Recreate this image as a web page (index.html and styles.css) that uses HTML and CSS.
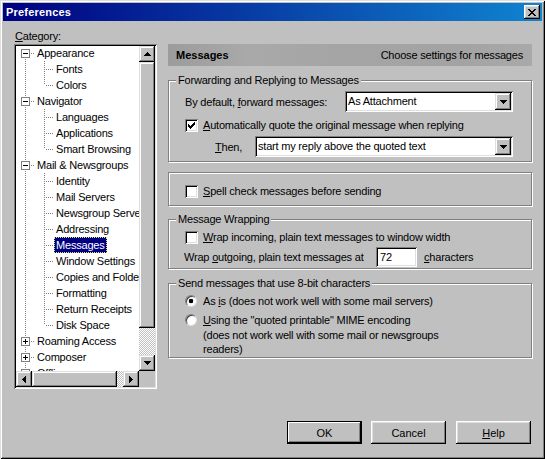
FILE: index.html
```html
<!DOCTYPE html>
<html>
<head>
<meta charset="utf-8">
<title>Preferences</title>
<link rel="stylesheet" href="styles.css">
</head>
<body>
<div class="window">
  <div class="titlebar">
    <span class="title">Preferences</span>
    <button class="tb-close" aria-label="Close"><svg width="8" height="7" viewBox="0 0 8 7"><path d="M0 0h2v1h1v1h2v-1h1v-1h2v1h-1v1h-1v1h-1v1h1v1h1v1h1v1h-2v-1h-1v-1h-2v1h-1v1h-2v-1h1v-1h1v-1h1v-1h-1v-1h-1v-1h-1z" fill="#000"/></svg></button>
  </div>

  <div class="main">
    <div class="left">
      <div class="cat-label"><u>C</u>ategory:</div>
      <div class="tree">
        <div class="tree-view">
          <div class="tree-list">
            <div class="node">
              <div class="row root"><span class="exp minus"></span><span class="conn"></span><span class="lbl">Appearance</span></div>
              <div class="children">
                <div class="row child"><span class="conn"></span><span class="lbl">Fonts</span></div>
                <div class="row child"><span class="conn"></span><span class="lbl">Colors</span></div>
              </div>
            </div>
            <div class="node">
              <div class="row root"><span class="exp minus"></span><span class="conn"></span><span class="lbl">Navigator</span></div>
              <div class="children">
                <div class="row child"><span class="conn"></span><span class="lbl">Languages</span></div>
                <div class="row child"><span class="conn"></span><span class="lbl">Applications</span></div>
                <div class="row child"><span class="conn"></span><span class="lbl">Smart Browsing</span></div>
              </div>
            </div>
            <div class="node">
              <div class="row root"><span class="exp minus"></span><span class="conn"></span><span class="lbl">Mail &amp; Newsgroups</span></div>
              <div class="children">
                <div class="row child"><span class="conn"></span><span class="lbl">Identity</span></div>
                <div class="row child"><span class="conn"></span><span class="lbl">Mail Servers</span></div>
                <div class="row child"><span class="conn"></span><span class="lbl">Newsgroup Servers</span></div>
                <div class="row child"><span class="conn"></span><span class="lbl">Addressing</span></div>
                <div class="row child"><span class="conn"></span><span class="lbl sel">Messages</span></div>
                <div class="row child"><span class="conn"></span><span class="lbl">Window Settings</span></div>
                <div class="row child"><span class="conn"></span><span class="lbl">Copies and Folders</span></div>
                <div class="row child"><span class="conn"></span><span class="lbl">Formatting</span></div>
                <div class="row child"><span class="conn"></span><span class="lbl">Return Receipts</span></div>
                <div class="row child"><span class="conn"></span><span class="lbl">Disk Space</span></div>
              </div>
            </div>
            <div class="node"><div class="row root"><span class="exp plus"></span><span class="conn"></span><span class="lbl">Roaming Access</span></div></div>
            <div class="node"><div class="row root"><span class="exp plus"></span><span class="conn"></span><span class="lbl">Composer</span></div></div>
            <div class="node"><div class="row root"><span class="exp plus"></span><span class="conn"></span><span class="lbl">Offline</span></div></div>
            <div class="node"><div class="row root"><span class="exp plus"></span><span class="conn"></span><span class="lbl">Advanced</span></div></div>
          </div>
        </div>
        <div class="vscroll">
          <div class="sb-btn"><svg width="7" height="4" viewBox="0 0 7 4"><path d="M3 0h1v1h1v1h1v1h1v1H0V3h1V2h1V1h1z"/></svg></div>
          <div class="track v">
            <div class="thumb vthumb"></div>
            <div class="checker"></div>
          </div>
          <div class="sb-btn"><svg width="7" height="4" viewBox="0 0 7 4"><path d="M0 0h7v1h-1v1h-1v1h-1v1h-1v-1h-1v-1h-1v-1h-1z"/></svg></div>
        </div>
        <div class="hscroll">
          <div class="sb-btn"><svg width="4" height="7" viewBox="0 0 4 7"><path d="M3 0h1v7h-1v-1h-1v-1h-1v-1h-1v-1h1v-1h1v-1h1z"/></svg></div>
          <div class="track h">
            <div class="thumb hthumb"></div>
            <div class="checker"></div>
          </div>
          <div class="sb-btn"><svg width="4" height="7" viewBox="0 0 4 7"><path d="M0 0h1v1h1v1h1v1h1v1h-1v1h-1v1h-1v1h-1z"/></svg></div>
        </div>
        <div class="corner"></div>
      </div>
    </div>

    <div class="right">
      <div class="header">
        <span class="header-title">Messages</span>
        <span class="header-sub">Choose settings for messages</span>
      </div>

      <div class="group g1">
        <div class="gtitle">Forwarding and Replying to Messages</div>
        <div class="frow r-forward">
          <span>By default, <u>f</u>orward messages:</span>
          <div class="combo w-forward">
            <span class="combo-text">As Attachment</span>
            <span class="combo-btn"><svg width="7" height="4" viewBox="0 0 7 4"><path d="M0 0h7v1h-1v1h-1v1h-1v1h-1v-1h-1v-1h-1v-1h-1z"/></svg></span>
          </div>
        </div>
        <div class="crow r-quote">
          <span class="cb"><svg width="7" height="7" viewBox="0 0 7 7"><path d="M6 0h1v1h-1z M5 1h2v1h-2z M0 2h1v1h-1z M4 2h3v1h-3z M0 3h2v1h-2z M3 3h3v1h-3z M0 4h5v1h-5z M1 5h3v1h-3z M2 6h1v1h-1z"/></svg></span>
          <span><u>A</u>utomatically quote the original message when replying</span>
        </div>
        <div class="frow r-then">
          <span><u>T</u>hen,</span>
          <div class="combo w-then">
            <span class="combo-text">start my reply above the quoted text</span>
            <span class="combo-btn"><svg width="7" height="4" viewBox="0 0 7 4"><path d="M0 0h7v1h-1v1h-1v1h-1v1h-1v-1h-1v-1h-1v-1h-1z"/></svg></span>
          </div>
        </div>
      </div>

      <div class="group g2">
        <div class="crow r-spell">
          <span class="cb"></span>
          <span><u>S</u>pell check messages before sending</span>
        </div>
      </div>

      <div class="group g3">
        <div class="gtitle">Message Wrapping</div>
        <div class="crow r-wrapin">
          <span class="cb"></span>
          <span><u>W</u>rap incoming, plain text messages to window width</span>
        </div>
        <div class="frow r-wrapout">
          <span class="wrap-label">Wrap <u>o</u>utgoing, plain text messages at</span>
          <span class="field">72</span>
          <span class="chars"><u>c</u>haracters</span>
        </div>
      </div>

      <div class="group g4">
        <div class="gtitle">Send messages that use 8-bit characters</div>
        <div class="crow r-asis">
          <span class="radio on"></span>
          <span>As <u>i</u>s (does not work well with some mail servers)</span>
        </div>
        <div class="crow r-qp">
          <span class="radio"></span>
          <span><u>U</u>sing the "quoted printable" MIME encoding</span>
        </div>
        <div class="subtext">(does not work well with some mail or newsgroups<br>readers)</div>
      </div>
    </div>
  </div>

  <div class="footer">
    <button class="btn default">OK</button>
    <button class="btn">Cancel</button>
    <button class="btn help"><u>H</u>elp</button>
  </div>
</div>
</body>
</html>
```

FILE: styles.css
```css
* { box-sizing: border-box; }

html, body { margin: 0; padding: 0; }

body {
  background: #c0c0c0;
  font-family: "Liberation Sans", Arial, sans-serif;
  font-size: 11px;
  letter-spacing: -0.2px;
  color: #000;
}

u { text-decoration: underline; text-underline-offset: 1px; }

.window {
  width: 545px;
  height: 459px;
  padding: 3px;
  background: #c0c0c0;
  display: flex;
  flex-direction: column;
  box-shadow: inset 1px 1px #dfdfdf, inset -1px -1px #000, inset 2px 2px #fff, inset -2px -2px #808080;
}

/* ---------- title bar ---------- */
.titlebar {
  height: 18px;
  flex: none;
  display: flex;
  align-items: center;
  justify-content: space-between;
  padding: 0 2px 0 3px;
  background: linear-gradient(to right, #000080, #1084d0);
}
.title { color: #fff; font-weight: bold; letter-spacing: 0.2px; }
.tb-close {
  width: 16px;
  height: 14px;
  padding: 0;
  border: 0;
  background: #c0c0c0;
  display: flex;
  align-items: center;
  justify-content: center;
  box-shadow: inset -1px -1px #000, inset 1px 1px #fff, inset -2px -2px #808080, inset 2px 2px #dfdfdf;
}

/* ---------- raised / sunken helpers ---------- */
.sb-btn, .thumb, .combo-btn {
  background: #c0c0c0;
  box-shadow: inset -1px -1px #000, inset 1px 1px #dfdfdf, inset -2px -2px #808080, inset 2px 2px #fff;
}

/* ---------- main ---------- */
.main {
  flex: 1;
  display: flex;
  padding: 9px 0 0 11px;
}

.left { width: 143px; flex: none; }
.cat-label { line-height: 13px; padding-left: 1px; }

.tree {
  margin-top: 1px;
  width: 143px;
  height: 345px;
  padding: 2px;
  background: #c0c0c0;
  display: grid;
  grid-template-columns: 1fr 16px;
  grid-template-rows: 1fr 16px;
  box-shadow: inset 1px 1px #808080, inset -1px -1px #fff, inset 2px 2px #000, inset -2px -2px #dfdfdf;
}

.tree-view {
  background: #fff;
  overflow: hidden;
}

.tree-list {
  margin-top: -1px;
  background: repeating-linear-gradient(to bottom, #808080 0 1px, transparent 1px 2px) 9px 8px / 1px 100% no-repeat;
}

.children {
  background: repeating-linear-gradient(to bottom, #808080 0 1px, transparent 1px 2px) 28px 0 / 1px calc(100% - 8px) no-repeat;
}

.row {
  height: 16px;
  display: flex;
  align-items: center;
  white-space: nowrap;
}
.row.root { padding-left: 5px; }
.row.child { padding-left: 29px; }

.exp {
  width: 9px;
  height: 9px;
  flex: none;
  border: 1px solid #808080;
  background-color: #fff;
}
.exp.minus {
  background: linear-gradient(#000, #000) center / 5px 1px no-repeat, #fff;
}
.exp.plus {
  background: linear-gradient(#000, #000) center / 5px 1px no-repeat,
              linear-gradient(#000, #000) center / 1px 5px no-repeat, #fff;
}

.conn {
  height: 1px;
  flex: none;
  background: repeating-linear-gradient(to right, transparent 0 1px, #808080 1px 2px);
}
.root .conn { width: 5px; }
.child .conn { width: 9px; }

.lbl {
  flex: none;
  line-height: 16px;
  height: 16px;
  padding: 0 2px;
}
.lbl.sel {
  background: #000080;
  color: #fff;
  outline: 1px dotted #e8e860;
  outline-offset: -1px;
}

/* scrollbars */
.vscroll { display: flex; flex-direction: column; }
.hscroll { display: flex; }
.sb-btn {
  width: 16px;
  height: 16px;
  flex: none;
  display: flex;
  align-items: center;
  justify-content: center;
}
.track { flex: 1; display: flex; }
.track.v { flex-direction: column; }
.vthumb { height: 266px; flex: none; }
.hthumb { width: 85px; flex: none; }
.checker {
  flex: 1;
  background: conic-gradient(#fff 25%, #c0c0c0 0 50%, #fff 0 75%, #c0c0c0 0) 0 0 / 2px 2px;
}
.corner { background: #c0c0c0; }

/* ---------- right panel ---------- */
.right {
  width: 364px;
  margin-left: 11px;
  padding-top: 14px;
  display: flex;
  flex-direction: column;
}

.header {
  height: 22px;
  display: flex;
  align-items: center;
  justify-content: space-between;
  padding: 0 9px 0 8px;
  background: linear-gradient(to right, #9c9c9c 0%, #a9a9a9 22%, #a5a5a5 45%, #a3a3a3 80%, #a9a9a9 100%);
}
.header-title { font-weight: bold; letter-spacing: 0; }

.group {
  border: 1px solid #808080;
  box-shadow: inset 1px 1px #fff, 1px 1px #fff;
  padding: 0 18px 4px 16px;
}
.g1 { margin-top: 14px; }
.g2 { margin-top: 10px; padding-bottom: 6px; }
.g3 { margin-top: 13px; padding-bottom: 1px; }
.g4 { margin-top: 14px; padding-bottom: 1px; }

.gtitle {
  width: fit-content;
  margin: -7px 0 0 -9px;
  padding: 0 2px;
  line-height: 13px;
  background: #c0c0c0;
}

.frow {
  display: flex;
  align-items: center;
  white-space: nowrap;
}
.crow {
  display: flex;
  align-items: center;
  height: 16px;
  gap: 5px;
  white-space: nowrap;
}

.r-forward { height: 21px; margin-top: 4px; }
.r-quote { margin-top: 5px; }
.r-then { height: 21px; margin-top: 3px; padding-left: 30px; }
.r-spell { margin-top: 10px; }
.r-wrapin { margin-top: 3px; }
.r-wrapout { height: 20px; margin-top: 2px; margin-left: -1px; }
.r-asis { margin-top: 3px; gap: 6px; }
.r-qp { margin-top: 3px; gap: 6px; }

.combo {
  height: 21px;
  margin-left: auto;
  padding: 2px;
  background: #fff;
  display: flex;
  align-items: center;
  box-shadow: inset 1px 1px #808080, inset -1px -1px #fff, inset 2px 2px #000, inset -2px -2px #dfdfdf;
}
.w-forward { width: 168px; }
.w-then { width: 258px; }
.combo-text { flex: 1; padding-left: 1px; line-height: 17px; overflow: hidden; }
.combo-btn {
  width: 16px;
  height: 17px;
  flex: none;
  display: flex;
  align-items: center;
  justify-content: center;
}

.cb {
  width: 13px;
  height: 13px;
  flex: none;
  background: #fff;
  display: flex;
  align-items: center;
  justify-content: center;
  box-shadow: inset 1px 1px #808080, inset -1px -1px #fff, inset 2px 2px #000, inset -2px -2px #dfdfdf;
}

.wrap-label { width: 192px; flex: none; }
.field {
  width: 41px;
  height: 20px;
  flex: none;
  padding: 0 0 0 4px;
  line-height: 20px;
  background: #fff;
  box-shadow: inset 1px 1px #808080, inset -1px -1px #fff, inset 2px 2px #000, inset -2px -2px #dfdfdf;
}
.chars { margin-left: 7px; }

.radio {
  width: 12px;
  height: 12px;
  flex: none;
  border-radius: 50%;
  border: 1px solid;
  border-color: #808080 #dfdfdf #dfdfdf #808080;
  background: #fff;
  box-shadow: inset 1px 1px 0 #404040;
}
.radio.on {
  background: radial-gradient(circle, #000 0 2px, #fff 2.6px);
}

.subtext {
  padding-left: 18px;
  line-height: 14px;
}

/* ---------- footer ---------- */
.footer {
  flex: none;
  display: flex;
  justify-content: flex-end;
  gap: 9px;
  padding: 0 11px 12px 0;
}
.btn {
  width: 75px;
  height: 23px;
  padding: 0;
  border: 0;
  background: #c0c0c0;
  font: inherit;
  color: #000;
  box-shadow: inset -1px -1px #000, inset 1px 1px #fff, inset -2px -2px #808080, inset 2px 2px #dfdfdf;
}
.btn.default {
  border: 1px solid #000;
  box-shadow: inset -1px -1px #000, inset 1px 1px #fff, inset -2px -2px #808080;
}
.btn.help { margin-left: 1px; }
```
